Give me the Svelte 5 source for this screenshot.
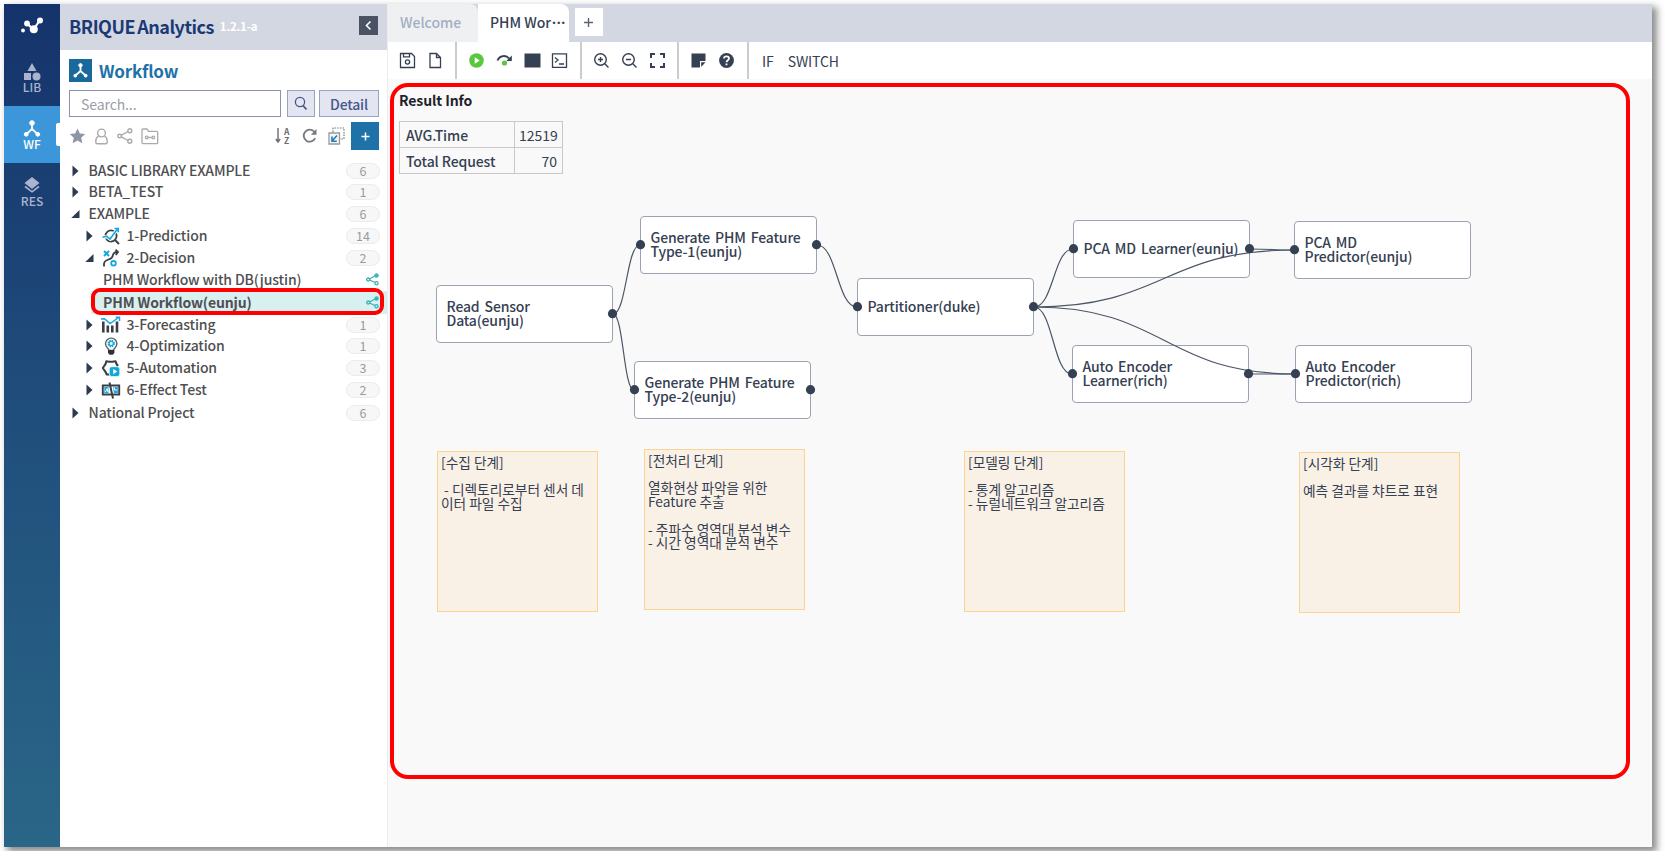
<script>
  const tree = [
    { label: 'BASIC LIBRARY EXAMPLE', level: 0, open: false, count: 6 },
    { label: 'BETA_TEST', level: 0, open: false, count: 1 },
    { label: 'EXAMPLE', level: 0, open: true, count: 6 },
    { label: '1-Prediction', level: 1, open: false, count: 14, icon: 'predict' },
    { label: '2-Decision', level: 1, open: true, count: 2, icon: 'decide' },
    { label: 'PHM Workflow with DB(justin)', level: 2 },
    { label: 'PHM Workflow(eunju)', level: 2, selected: true },
    { label: '3-Forecasting', level: 1, open: false, count: 1, icon: 'forecast' },
    { label: '4-Optimization', level: 1, open: false, count: 1, icon: 'optimize' },
    { label: '5-Automation', level: 1, open: false, count: 3, icon: 'automate' },
    { label: '6-Effect Test', level: 1, open: false, count: 2, icon: 'effect' },
    { label: 'National Project', level: 0, open: false, count: 6, last: true }
  ];

  // Canvas coordinates, relative to the canvas' top left corner
  const nodes = [
    { id: 'read', x: 48, y: 206, lines: ['Read Sensor', 'Data(eunju)'], out: true },
    { id: 'gen1', x: 252, y: 137, lines: ['Generate PHM Feature', 'Type-1(eunju)'], in: true, out: true },
    { id: 'gen2', x: 246, y: 282, lines: ['Generate PHM Feature', 'Type-2(eunju)'], in: true, out: true },
    { id: 'part', x: 469, y: 199, lines: ['Partitioner(duke)'], in: true, out: true },
    { id: 'pcal', x: 685, y: 141, lines: ['PCA MD Learner(eunju)'], in: true, out: true },
    { id: 'ael', x: 684, y: 266, lines: ['Auto Encoder', 'Learner(rich)'], in: true, out: true },
    { id: 'pcap', x: 906, y: 142, lines: ['PCA MD', 'Predictor(eunju)'], in: true },
    { id: 'aep', x: 907, y: 266, lines: ['Auto Encoder', 'Predictor(rich)'], in: true }
  ];
  const W = 177;
  const H = 58;
  const byId = Object.fromEntries(nodes.map((n) => [n.id, n]));
  const edges = [
    ['read', 'gen1'], ['read', 'gen2'], ['gen1', 'part'], ['part', 'pcal'],
    ['part', 'ael'], ['part', 'pcap'], ['part', 'aep'], ['pcal', 'pcap'], ['ael', 'aep']
  ].map(([a, b]) => {
    const x1 = byId[a].x + W, y1 = byId[a].y + H / 2;
    const x2 = byId[b].x, y2 = byId[b].y + H / 2;
    const m = (x1 + x2) / 2;
    return `M${x1} ${y1}C${m} ${y1} ${m} ${y2} ${x2} ${y2}`;
  });
  const notes = [
    { x: 49, y: 372, text: '[수집 단계]\n\n - 디렉토리로부터 센서 데\n이터 파일 수집' },
    { x: 256, y: 370, text: '[전처리 단계]\n\n열화현상 파악을 위한\nFeature 추출\n\n- 주파수 영역대 분석 변수\n- 시간 영역대 분석 변수' },
    { x: 576, y: 372, text: '[모델링 단계]\n\n- 통계 알고리즘\n- 뉴럴네트워크 알고리즘' },
    { x: 911, y: 373, text: '[시각화 단계]\n\n예측 결과를 챠트로 표현' }
  ];
</script>

<div class="frame">
  <nav class="rail">
    <div class="logo">
      <svg width="24" height="18" viewBox="0 0 24 18"><path d="M7 6.500L13.500 12.500L20 3" stroke="#fff" stroke-width="2.200" fill="none"/><circle cx="3" cy="13.500" r="1.900" fill="#fff"/><circle cx="7" cy="6.500" r="2.900" fill="#fff"/><circle cx="13.800" cy="12.300" r="4" fill="#fff"/><circle cx="20" cy="3.500" r="3" fill="#fff"/></svg>
    </div>
    <div class="rail-item lib">
      <svg width="18" height="18" viewBox="0 0 18 18" fill="#aab4cb"><path d="M9 0L13.500 8H4.500zM1 10h7v7H1z"/><circle cx="13.500" cy="13.500" r="4"/></svg>
      <span>LIB</span>
    </div>
    <div class="rail-item active">
      <svg width="18" height="18" viewBox="0 0 18 18" fill="#fff" stroke="#fff"><path d="M9 3v6L3.500 14M9 9l5.500 5" fill="none" stroke-width="1.800"/><circle cx="9" cy="3" r="2.300"/><circle cx="3.200" cy="14.300" r="1.900"/><circle cx="14.800" cy="14.300" r="1.900"/></svg>
      <span>WF</span>
      <i class="notch"></i>
    </div>
    <div class="rail-item res">
      <svg width="18" height="18" viewBox="0 0 18 18"><path d="M9 1L16.500 7L9 13L1.500 7z" fill="#aab4cb"/><path d="M2 10.500L9 15.800L16 10.500" fill="none" stroke="#aab4cb" stroke-width="1.600"/></svg>
      <span>RES</span>
    </div>
  </nav>

  <aside class="side">
    <header class="brand">
      <b class="brique">BRIQUE</b><b class="analytics">Analytics</b><span class="version">1.2.1-a</span>
      <button class="collapse" aria-label="Collapse"><svg width="19" height="19" viewBox="0 0 19 19"><path d="M11.500 5.500L7.500 9.500L11.500 13.500" fill="none" stroke="#fff" stroke-width="1.600"/></svg></button>
    </header>
    <div class="title">
      <svg width="23" height="23" viewBox="0 0 23 23"><path d="M0 0h23v23H0z" fill="#19699c"/><g fill="#fff" stroke="#fff"><path d="M11.500 6v6L6.500 16.500M11.500 12l5 4.500" fill="none" stroke-width="1.800"/><circle cx="11.500" cy="6.300" r="1.700"/><circle cx="6.300" cy="16.700" r="1.400"/><circle cx="16.700" cy="16.700" r="1.400"/></g></svg>
      <h1>Workflow</h1>
    </div>
    <div class="search">
      <div class="field">Search...</div>
      <button class="find" aria-label="Search"><svg width="14" height="15" viewBox="0 0 14 15" fill="none" stroke="#46578c" stroke-width="1.300"><circle cx="6" cy="6" r="4.600"/><path d="M9 9.500L12.500 13.500" stroke-width="1.800"/></svg></button>
      <button class="detail">Detail</button>
    </div>
    <div class="tools">
      <svg width="17" height="16" viewBox="0 0 17 16"><path d="M8.500 .5l2.300 5 5.400.6-4 3.700 1.100 5.400-4.800-2.700-4.800 2.700 1.100-5.400-4-3.700 5.400-.6z" fill="#8e95a7"/></svg>
      <svg class="t2" width="15" height="17" viewBox="0 0 15 17" fill="none" stroke="#aaaaac" stroke-width="1.400"><circle cx="7.500" cy="5" r="3.900"/><path d="M4.500 8.200C2.500 9.200 1.800 11 1.800 13v1.200q0 1.500 1.500 1.500h8.400q1.500 0 1.500-1.500V13c0-2-.7-3.800-2.700-4.800"/></svg>
      <svg class="t3" width="16" height="16" viewBox="0 0 16 16" fill="none" stroke="#aaaaac" stroke-width="1.400"><path d="M4 7.300L11 3.500M4 8.700L11 12.500"/><circle cx="2.600" cy="8" r="1.800"/><circle cx="12.800" cy="2.800" r="2"/><circle cx="12.800" cy="13.200" r="2"/></svg>
      <svg class="t4" width="18" height="17" viewBox="0 0 18 17" fill="none" stroke="#aaaaac" stroke-width="1.300"><path d="M1 14.500V2q0-1 1-1h4l1.500 2.300h8q1.200 0 1.200 1.200v10q0 1.200-1.200 1.200H2.200Q1 15.700 1 14.500z"/><circle cx="5.700" cy="9.500" r="1.300"/><path d="M7 9.500h4"/><circle cx="12.300" cy="9.500" r="1.300"/></svg>
      <svg class="sort" width="16" height="18" viewBox="0 0 16 18"><path d="M3 1v13.500M.8 12L3 15l2.200-3" stroke="#6b6d72" stroke-width="1.400" fill="none"/><text x="9" y="7.500" class="az">A</text><text x="9" y="16.500" class="az">Z</text></svg>
      <svg class="refresh" width="16" height="16" viewBox="0 0 16 16"><path d="M13.200 10.200A6 6 0 1 1 12.500 4" fill="none" stroke="#77797d" stroke-width="1.800"/><path d="M14.500 1v5.800H8.800z" fill="#77797d"/></svg>
      <svg class="expand" width="17" height="18" viewBox="0 0 17 18" fill="none"><path d="M5 5V1h11v11h-4" stroke="#777" stroke-width="1.200" stroke-dasharray="1.500 1.200"/><path d="M1 6h10.500v11H1z" fill="#f6f6f6" stroke="#999" stroke-width="1.300"/><path d="M9 8.500L4.500 13.500M4 9.500V14.200h4.800" stroke="#1a7fb6" stroke-width="1.600"/></svg>
      <button class="add" aria-label="Add"><svg width="9" height="9" viewBox="0 0 9 9"><path d="M4.500 .5v8M.5 4.500h8" stroke="#fff" stroke-width="1.500"/></svg></button>
    </div>
    <ul class="tree">
      {#each tree as row}
        <li class="l{row.level}" class:selected={row.selected} class:last={row.last}>
          {#if row.level < 2}
            <svg class="caret" width="9" height="12" viewBox="0 0 9 12"><path d={row.open ? 'M8.500 2v8H.3z' : 'M1.500 .5L7.500 6L1.500 11.500z'} fill="#2d3a50"/></svg>
          {/if}
          {#if row.icon}
            <svg class="kind" width="20" height="18" viewBox="0 0 20 18" fill="none">
              {#if row.icon === 'predict'}
                <circle cx="10" cy="9" r="5.600" stroke="#3a3f45" stroke-width="1.800"/><path d="M14 13L18 17" stroke="#3a3f45" stroke-width="2"/><path d="M1.500 10.200L5.500 9.500l3.500 2.500L15.500 3" stroke="#fff" stroke-width="3.300"/><path d="M1.500 10.200L5.500 9.200l3.500 2.800L16 2.500M13.500 1.500h3.700v3.700" stroke="#13a8dc" stroke-width="1.600"/>
              {:else if row.icon === 'decide'}
                <path d="M3 2l5 5M8 2l-5 5" stroke="#13a8dc" stroke-width="2"/><circle cx="12.500" cy="14.300" r="2.300" stroke="#13a8dc" stroke-width="1.800"/><path d="M3 17.500V15C3 9.500 10.500 11.500 11.500 7.500 12.300 4.500 13 3 16.500 3M14.500 .7L17 3l-2.200 3" stroke="#3a3f45" stroke-width="1.800"/>
              {:else if row.icon === 'forecast'}
                <path d="M1 5.500h2.600v11H1zM5.500 9.500h2.600v7H5.500zM10 9.500h2.600v7H10zM14.700 5.500h2.600v11h-2.600z" fill="#3a3f45"/><path d="M0 3l3.500-.3 5.500 4.800L17 2M14.800 1.200h3.700v3.700" stroke="#13a8dc" stroke-width="1.500"/>
              {:else if row.icon === 'optimize'}
                <path d="M8 13.500C8 11.500 4.500 10.500 4.500 6.800a5.700 5.700 0 0 1 11.400 0C15.900 10.500 12.400 11.500 12.400 13.500z" fill="#fff" stroke="#5b6066" stroke-width="1.400"/><path d="M7 13h6.400v3l-1.700 1.700H8.700L7 16z" fill="#2c3238"/><circle cx="10.200" cy="6.500" r="3.100" stroke="#13a8dc" stroke-width="1.300" stroke-dasharray="1.600 .85"/><circle cx="10.200" cy="6.500" r="2.100" stroke="#13a8dc" stroke-width="1.300"/>
              {:else if row.icon === 'automate'}
                <path d="M8.500 15.500H5.800L4.500 12.800 1.800 9 4.500 5.200 5.300 2.200 8 2.700H11.500L14.500 2.200 15.500 5 17 7" stroke="#3a3f45" stroke-width="2.100" stroke-linejoin="round"/><rect x="8.300" y="7.700" width="10.400" height="9.800" rx="2.500" fill="#13a8dc" stroke="#fff" stroke-width=".6"/><path d="M12.200 10v5.200l4-2.600z" fill="#fff"/>
              {:else}
                <path d="M1.800 4.500h16.400v9H1.800z" fill="#fff" stroke="#3a3f45" stroke-width="1.900"/><path d="M3.300 6h4.200v6H3.300zM12.300 6h4.500v6h-4z" fill="#13a8dc"/><path d="M4.300 11l2-3.500.6 3.500M13.500 6.500v2.500h2.500" stroke="#fff" stroke-width="1"/><path d="M8.500 1.500L12 17.500" stroke="#3a3f45" stroke-width="2"/>
              {/if}
            </svg>
          {/if}
          <span class="label">{row.label}</span>
          {#if row.count}
            <span class="count">{row.count}</span>
          {:else}
            <svg class="share" width="13" height="13" viewBox="0 0 13 13" fill="none" stroke="#38b3b8" stroke-width="1.300"><path d="M3.500 6L9 3M3.500 7L9 9.500"/><circle cx="2.200" cy="6.500" r="1.500"/><circle cx="10.500" cy="2.500" r="1.600" fill="#38b3b8"/><circle cx="10.500" cy="10.300" r="1.600"/></svg>
          {/if}
        </li>
      {/each}
    </ul>
    <div class="mark mark-row"></div>
  </aside>

  <main class="main">
    <div class="tabs">
      <div class="tab">Welcome</div>
      <div class="tab current">PHM Wor<span class="dots">···</span></div>
      <button class="newtab" aria-label="New tab"><svg width="9" height="9" viewBox="0 0 9 9"><path d="M4.500 0v9M0 4.500h9" stroke="#5b6473" stroke-width="1.400"/></svg></button>
    </div>
    <div class="toolbar">
      <div class="group g1">
        <svg width="17" height="17" viewBox="0 0 17 17" fill="none" stroke="#354052" stroke-width="1.300"><path d="M1.500 1.500h11l3 3v11h-14zM4.500 1.500v3.300h6V1.500"/><circle cx="8.500" cy="10" r="2.100"/></svg>
        <svg width="17" height="17" viewBox="0 0 17 17" fill="none" stroke="#354052" stroke-width="1.300"><path d="M3 1.500h6.500l4 4v10H3zM9.500 1.500v4h4"/></svg>
      </div>
      <div class="group g2">
        <svg width="17" height="17" viewBox="0 0 17 17"><circle cx="8.500" cy="8.500" r="7.300" fill="#5cc73e"/><path d="M6.700 5.200v6.600l5-3.300z" fill="#fff"/></svg>
        <svg width="17" height="17" viewBox="0 0 17 17"><path d="M1.500 8.500C3.500 3.500 10 2.500 13 6.500" fill="none" stroke="#354052" stroke-width="1.900"/><path d="M15.800 3.500v5.500h-5.500z" fill="#354052"/><circle cx="8.500" cy="11" r="2.600" fill="#5cc73e"/></svg>
        <svg width="17" height="17" viewBox="0 0 17 17"><path d="M.5 1.500h16v14H.5z" fill="#354052"/></svg>
        <svg width="17" height="17" viewBox="0 0 17 17" fill="none" stroke="#354052" stroke-width="1.300"><path d="M1.500 1.800h14v13.500h-14zM4 5.500l3 2.500-3 2.500M8 12h5"/></svg>
      </div>
      <div class="group g3">
        <svg width="17" height="17" viewBox="0 0 17 17" fill="none" stroke="#354052" stroke-width="1.400"><circle cx="7.500" cy="7.500" r="5.800"/><path d="M11.800 11.800l3.700 3.700M7.500 5v5M5 7.500h5"/></svg>
        <svg width="17" height="17" viewBox="0 0 17 17" fill="none" stroke="#354052" stroke-width="1.400"><circle cx="7.500" cy="7.500" r="5.800"/><path d="M11.800 11.800l3.700 3.700M5 7.500h5"/></svg>
        <svg width="17" height="17" viewBox="0 0 17 17" fill="none" stroke="#354052" stroke-width="2"><path d="M2 6V2h4M11 2h4v4M15 11v4h-4M6 15H2v-4"/></svg>
      </div>
      <div class="group g4">
        <svg width="17" height="17" viewBox="0 0 17 17" fill="#354052"><path d="M1.500 1.500h14v7.500h-5.500v6.500H1.500zM11.200 10.300h4.300l-4.300 4.700z"/></svg>
        <svg width="17" height="17" viewBox="0 0 17 17"><circle cx="8.500" cy="8.500" r="7.400" fill="#354052"/><path d="M6 6.600C6 3.500 11 3.600 11 6.500 11 8.300 8.500 8.200 8.500 10.200M8.500 11.500v1.800" fill="none" stroke="#fff" stroke-width="1.800"/></svg>
      </div>
      <div class="group words"><span>IF</span><span>SWITCH</span></div>
    </div>

    <section class="canvas">
      <h2>Result Info</h2>
      <table>
        <tbody>
          <tr><th>AVG.Time</th><td>12519</td></tr>
          <tr><th>Total Request</th><td>70</td></tr>
        </tbody>
      </table>
      {#each nodes as n}
        <div class="node" style="left:{n.x}px;top:{n.y}px">
          {#each n.lines as line}<span>{line}</span>{/each}
        </div>
      {/each}
      <svg class="wires" width="1264" height="768">
        {#each edges as d}<path {d} fill="none" stroke="#4b5566" stroke-width="1.200"/>{/each}
        {#each nodes as n}
          {#if n.in}<circle cx={n.x + .5} cy={n.y + H / 2 - .3} r="4.600" fill="#354052"/>{/if}
          {#if n.out}<circle cx={n.x + W - .5} cy={n.y + H / 2 - .3} r="4.600" fill="#354052"/>{/if}
        {/each}
      </svg>
      {#each notes as n}
        <div class="note" style="left:{n.x}px;top:{n.y}px">{n.text}</div>
      {/each}
      <div class="mark mark-canvas"></div>
    </section>
  </main>
</div>

<style>
  :global(body) { margin: 0; background: #fff; overflow: hidden; }
  :global(html) { height: 860px; }
  * { box-sizing: border-box; }
  button { border: 0; padding: 0; font: inherit; display: flex; align-items: center; justify-content: center; }
  svg { display: block; flex: none; }
  .frame {
    display: flex; width: 1648px; height: 843px; margin: 4px;
    box-shadow: 4px 4px 7px 1px rgba(0, 0, 0, .45);
    font-family: "Noto Sans CJK KR", "Noto Sans", sans-serif; font-weight: 500; color: #4f4f52;
    background: #fff;
  }
  .rail { width: 56px; background: linear-gradient(#15336b, #1f4c7b 45%, #2a6687); display: flex; flex-direction: column; }
  .logo { height: 44px; display: flex; align-items: center; justify-content: center; }
  .rail-item { position: relative; height: 57px; display: flex; flex-direction: column; align-items: center; padding-top: 13px; font-size: 12px; line-height: 12px; color: #aab4cb; }
  .rail-item span { margin-top: 0; }
  .lib { padding-top: 15px; height: 58px; }
  .active { background: #3b97d9; color: #fff; padding-top: 14px; }
  .res span { margin-top: 1px; }
  .notch { position: absolute; right: 0; top: 17px; width: 4px; height: 23px; background: #fff; border-radius: 2px 0 0 2px; }
  .side { position: relative; width: 328px; border-right: 1px solid #ececec; }
  .brand { height: 46px; background: #d3d7e2; display: flex; align-items: center; padding: 0 9px 2px; color: #1b3a75; }
  .brique { font-size: 18px; letter-spacing: -.45px; }
  .analytics { font-size: 18px; margin-left: 2px; letter-spacing: -.5px; }
  .version { color: #fff; font-size: 11.500px; letter-spacing: -.2px; margin: -1px 0 0 6px; font-weight: 700; }
  .collapse { margin-left: auto; width: 19px; height: 19px; background: #4a5264; margin-top: -1px; }
  .title { display: flex; align-items: center; height: 23px; margin: 9px 9px 0; gap: 7px; color: #1e72a8; }
  h1 { margin: 0; font-size: 17px; font-weight: 700; line-height: 23px; letter-spacing: -.2px; }
  .search { display: flex; height: 27px; margin: 8px 8px 0 9px; font-size: 14px; }
  .field { width: 212px; border: 1px solid #8b93a8; padding-left: 11px; line-height: 26px; letter-spacing: -.1px; color: #9a9eaa; font-weight: 400; }
  .find { width: 28px; margin-left: 6px; background: #e3e6f1; border: 1px solid #98a3c4; }
  .detail { width: 60px; margin-left: 4px; background: #e3e6f1; border: 1px solid #98a3c4; color: #46578c; font-size: 14px; letter-spacing: -.2px; }
  .tools { display: flex; align-items: center; height: 28px; margin: 5px 8px 0 9px; }
  .t2 { margin-left: 8px; }
  .t3 { margin-left: 8px; }
  .t4 { margin-left: 8px; }
  .sort { margin-left: auto; overflow: visible; }
  .az { font-size: 8.500px; font-weight: 700; fill: #6b6d72; }
  .refresh { margin-left: 11px; }
  .expand { margin-left: 10px; }
  .add { width: 28px; height: 28px; margin-left: 6px; background: #1e72a8; }
  .tree { list-style: none; margin: 9.700px 0 0; padding: 0; font-size: 14px; letter-spacing: -.14px; }
  li { display: flex; align-items: center; height: 21.800px; line-height: 21.800px; padding: 0 7px 0 11px; }
  .l0 .label { margin-left: 8.500px; }
  .l1 { padding-left: 25px; }
  .kind { margin: 0 5.500px 0 7px; }
  .l2 { padding-left: 12px; margin-left: 31px; height: 22.500px; padding-right: 8px; }
  .selected { background: #d9f0f1; font-weight: 700; }
  .last { margin-top: 1px; }
  .label { white-space: nowrap; }
  .count { margin-left: auto; width: 34px; height: 16px; line-height: 13px; border-radius: 8px; border: 1px solid #ececee; background: #f7f7f8; text-align: center; font-size: 12.500px; letter-spacing: 0; color: #9b9ba0; font-weight: 400; }
  .share { margin-left: auto; }
  .mark { position: absolute; border: 4px solid #f00; pointer-events: none; }
  .mark-row { left: 31px; top: 284px; width: 293px; height: 27px; border-radius: 9px; }
  .main { flex: 1; display: flex; flex-direction: column; min-width: 0; }
  .tabs { height: 38px; background: #d3d7e2; display: flex; align-items: flex-start; font-size: 14px; }
  .tab { width: 90px; height: 38px; line-height: 37px; padding-left: 12px; background: #eff0f2; color: #a3aec4; border-top-right-radius: 8px; white-space: nowrap; }
  .current { width: 91px; background: #fff; color: #354052; display: flex; }
  .dots { font-family: "Noto Sans", sans-serif; font-weight: 700; letter-spacing: .7px; margin-left: 1px; }
  .newtab { margin: 4px 0 0 5.500px; width: 28px; height: 28px; background: #fff; }
  .toolbar { height: 37px; display: flex; background: #fff; }
  .group { display: flex; align-items: center; border-right: 2px solid #ccc; }
  .g1 { width: 69px; padding-left: 11px; gap: 11px; }
  .g2 { width: 125px; padding-left: 11px; gap: 10.800px; }
  .g3 { width: 97px; padding-left: 11px; gap: 10.800px; }
  .g4 { width: 70px; padding-left: 11px; gap: 10.500px; }
  .words { border: 0; padding-left: 13px; gap: 14px; font-size: 14px; font-weight: 400; color: #354052; letter-spacing: -.1px; }
  .canvas { position: relative; flex: 1; background: #f9f9f9; padding: 11px 0 0 11px; overflow: hidden; color: #354052; }
  h2 { margin: 0; font-size: 14px; line-height: 20px; color: #1f2329; font-weight: 700; letter-spacing: -.1px; }
  table { border-collapse: collapse; margin-top: 11px; font-size: 14px; width: 164px; table-layout: fixed; letter-spacing: -.1px; }
  th, td { border: 1px solid #c9c9c9; height: 26px; line-height: 20px; padding: 0 5px 0 6px; }
  th { text-align: left; font-weight: 500; width: 115px; }
  td { text-align: right; font-weight: 400; padding-left: 4px; letter-spacing: 0; }
  .node { position: absolute; width: 177px; height: 58px; border: 1px solid #9ba2b0; border-radius: 4px; background: #fff; display: flex; flex-direction: column; justify-content: center; padding: 0 0 0 9.500px; font-size: 14px; line-height: 13.800px; letter-spacing: -.15px; word-spacing: 2px; white-space: nowrap; }
  .wires { position: absolute; left: 0; top: 0; }
  .note { position: absolute; width: 161px; height: 161px; border: 1px solid #fbd58f; background: #faf1e6; padding: 4px 3px; font-size: 13.700px; line-height: 13.700px; white-space: pre; font-weight: 400; }
  .mark-canvas { left: 2px; top: 4px; width: 1240px; height: 696px; border-radius: 18px; }
</style>
